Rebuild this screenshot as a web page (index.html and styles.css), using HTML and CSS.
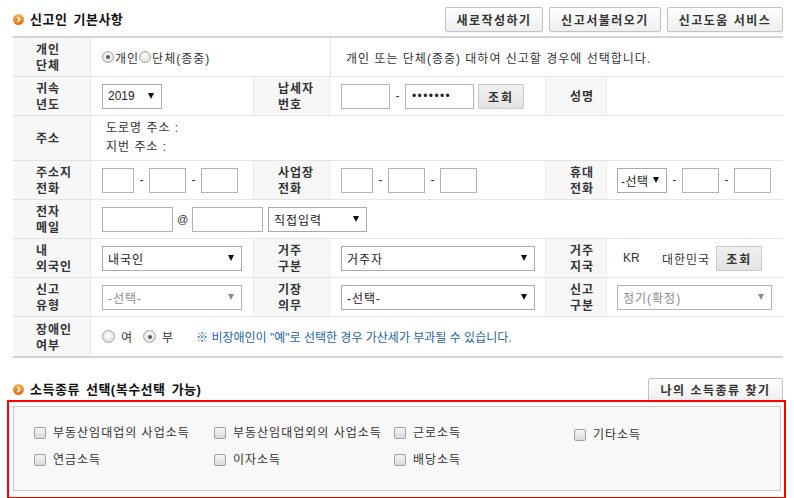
FILE: index.html
```html
<!DOCTYPE html>
<html lang="ko">
<head>
<meta charset="utf-8">
<title>신고인 기본사항</title>
<link rel="stylesheet" href="styles.css">
</head>
<body>
<div class="page">
  <div class="sec-head">
    <h2 class="sec-title">
      <svg class="bullet" width="11" height="11" viewBox="0 0 11 11"><defs><linearGradient id="ga" x1="0" y1="0" x2="0" y2="1"><stop offset="0" stop-color="#f8b14c"/><stop offset="1" stop-color="#e46c10"/></linearGradient></defs><circle cx="5.5" cy="5.5" r="5.5" fill="url(#ga)"/><path d="M4.3 3 L6.8 5.5 L4.3 8" fill="none" stroke="#fff" stroke-width="1.6"/></svg>
      <span>신고인 기본사항</span>
    </h2>
    <div class="btns">
      <button class="btn w98">새로작성하기</button>
      <button class="btn w112">신고서불러오기</button>
      <button class="btn w116">신고도움 서비스</button>
    </div>
  </div>

  <div class="form">
    <!-- row 1 -->
    <div class="lab">개인<br>단체</div>
    <div class="val span2 tight ko">
      <span class="radio on"></span><span>개인</span><span class="radio"></span><span>단체(종중)</span>
    </div>
    <div class="val span3 desc bl ko">개인 또는 단체(종중) 대하여 신고할 경우에 선택합니다.</div>

    <!-- row 2 -->
    <div class="lab">귀속<br>년도</div>
    <div class="val"><div class="sel w60"><span class="lat">2019</span><i class="arr"></i></div></div>
    <div class="lab c2">납세자<br>번호</div>
    <div class="val">
      <span class="inp w49"></span><span class="dash">-</span><span class="inp w69 pw">•••••••</span><button class="gbtn">조회</button>
    </div>
    <div class="lab c2">성명</div>
    <div class="val c6"></div>

    <!-- row 3 -->
    <div class="lab">주소</div>
    <div class="val span5 addr ko">
      <div>도로명 주소 :</div>
      <div>지번 주소 :</div>
    </div>

    <!-- row 4 -->
    <div class="lab">주소지<br>전화</div>
    <div class="val"><span class="inp w32"></span><span class="dash">-</span><span class="inp w37"></span><span class="dash">-</span><span class="inp w37"></span></div>
    <div class="lab c2">사업장<br>전화</div>
    <div class="val"><span class="inp w32"></span><span class="dash">-</span><span class="inp w37"></span><span class="dash">-</span><span class="inp w37"></span></div>
    <div class="lab c2">휴대<br>전화</div>
    <div class="val c6"><div class="sel w50 sm ko"><span>-선택</span><i class="arr"></i></div><span class="dash">-</span><span class="inp w37"></span><span class="dash">-</span><span class="inp w37"></span></div>

    <!-- row 5 -->
    <div class="lab">전자<br>메일</div>
    <div class="val span5"><span class="inp w71"></span><span class="at">@</span><span class="inp w71"></span><div class="sel w99 ml5 ko"><span>직접입력</span><i class="arr"></i></div></div>

    <!-- row 6 -->
    <div class="lab">내<br>외국인</div>
    <div class="val"><div class="sel w140 ko"><span>내국인</span><i class="arr"></i></div></div>
    <div class="lab c2">거주<br>구분</div>
    <div class="val"><div class="sel w194 ko"><span>거주자</span><i class="arr"></i></div></div>
    <div class="lab c2">거주<br>지국</div>
    <div class="val c6"><span class="lat kr">KR</span><span class="nation ko">대한민국</span><button class="gbtn">조회</button></div>

    <!-- row 7 -->
    <div class="lab">신고<br>유형</div>
    <div class="val"><div class="sel w140 dis ko"><span>-선택-</span><i class="arr"></i></div></div>
    <div class="lab c2">기장<br>의무</div>
    <div class="val"><div class="sel w194 ko"><span>-선택-</span><i class="arr"></i></div></div>
    <div class="lab c2">신고<br>구분</div>
    <div class="val c6"><div class="sel w155 dis ko"><span>정기(확정)</span><i class="arr"></i></div></div>

    <!-- row 8 -->
    <div class="lab last">장애인<br>여부</div>
    <div class="val span5 last">
      <span class="radio big"></span><span class="rlab ko">여</span>
      <span class="radio big on"></span><span class="rlab ko">부</span>
      <span class="note">※ 비장애인이 "예"로 선택한 경우 가산세가 부과될 수 있습니다.</span>
    </div>
  </div>

  <div class="sec-head two">
    <h2 class="sec-title">
      <svg class="bullet" width="11" height="11" viewBox="0 0 11 11"><defs><linearGradient id="gb" x1="0" y1="0" x2="0" y2="1"><stop offset="0" stop-color="#f8b14c"/><stop offset="1" stop-color="#e46c10"/></linearGradient></defs><circle cx="5.5" cy="5.5" r="5.5" fill="url(#gb)"/><path d="M4.3 3 L6.8 5.5 L4.3 8" fill="none" stroke="#fff" stroke-width="1.6"/></svg>
      <span>소득종류 선택(복수선택 가능)</span>
    </h2>
    <button class="btn w134">나의 소득종류 찾기</button>
  </div>

  <div class="redbox">
    <div class="inner">
      <label class="chk"><span class="box"></span>부동산임대업의 사업소득</label>
      <label class="chk"><span class="box"></span>부동산임대업외의 사업소득</label>
      <label class="chk"><span class="box"></span>근로소득</label>
      <label class="chk shift"><span class="box"></span>기타소득</label>
      <label class="chk"><span class="box"></span>연금소득</label>
      <label class="chk"><span class="box"></span>이자소득</label>
      <label class="chk"><span class="box"></span>배당소득</label>
    </div>
  </div>
</div>
</body>
</html>
```

FILE: styles.css
```css
* { box-sizing: border-box; }
html, body { margin: 0; padding: 0; background: #fff; }
body {
  font-family: "Liberation Sans", "Noto Sans CJK KR", sans-serif;
  font-size: 12px;
  color: #333;
}
.page {
  width: 794px;
  padding: 0 11px 0 13px;
}
.ko { letter-spacing: 1px; }

/* section header */
.sec-head {
  display: flex;
  justify-content: space-between;
  align-items: center;
  height: 36px;
  padding-top: 7px;
  padding-bottom: 4px;
}
.sec-head.two {
  height: 43px;
  padding-top: 20px;
  padding-bottom: 0;
}
.sec-title {
  margin: 0;
  display: flex;
  align-items: center;
  gap: 6px;
  font-size: 13px;
  font-weight: bold;
  color: #111;
  letter-spacing: 0.5px;
  word-spacing: 2px;
  line-height: 16px;
}
.bullet { display: block; flex: none; }
.btns { display: flex; gap: 6px; }
.btn {
  height: 25px;
  padding: 0;
  border: 1px solid #c3c3c3;
  border-radius: 2px;
  background: linear-gradient(#ffffff, #eeeeee);
  font-family: "Noto Sans CJK KR", sans-serif;
  font-size: 12px;
  font-weight: bold;
  letter-spacing: 1.5px;
  color: #333;
  box-shadow: 0 1px 1px rgba(0,0,0,0.06);
}
.sec-head.two .btn { height: 24px; }
.w98 { width: 98px; }
.w112 { width: 112px; }
.w116 { width: 116px; }
.w134 { width: 135px; }

/* form grid */
.form {
  display: grid;
  grid-template-columns: 78px 162px 77px 215px 62px 176px;
  grid-template-rows: 39px 39px 45px 39px 39px 39px 39px 39px;
  border-top: 2px solid #d4d4d4;
  border-bottom: 2px solid #d4d4d4;
}
.lab {
  display: flex;
  align-items: center;
  padding-left: 23px;
  background: #f7f7f7;
  font-family: "Noto Sans CJK KR", sans-serif;
  font-weight: bold;
  font-size: 12px;
  letter-spacing: 1px;
  line-height: 16px;
  color: #333;
  border-bottom: 1px solid #e4e4e4;
  border-right: 1px solid #ebebeb;
}
.lab.c2 {
  padding-left: 24px;
  border-left: 1px solid #ebebeb;
}
.val {
  display: flex;
  align-items: center;
  padding-left: 11px;
  border-bottom: 1px solid #e4e4e4;
  min-width: 0;
  white-space: nowrap;
}
.val.c6 { padding-left: 10px; }
.last { border-bottom: none; }
.span2 { grid-column: span 2; }
.span3 { grid-column: span 3; }
.span5 { grid-column: span 5; }
.bl { border-left: 1px solid #e6e6e6; }
.desc { padding-left: 15px; }
.addr {
  flex-direction: column;
  align-items: flex-start;
  justify-content: center;
  padding-left: 15px;
  line-height: 19px;
}
.tight { gap: 0; }
.tight .radio { margin-right: 1px; }

/* controls */
.inp {
  display: block;
  height: 25px;
  border: 1px solid #b3b3b3;
  background: #fff;
  flex: none;
}
.w32 { width: 32px; }
.w37 { width: 37px; }
.w49 { width: 49px; }
.w50 { width: 50px; }
.w60 { width: 60px; }
.w69 { width: 69px; }
.w71 { width: 71px; }
.w99 { width: 99px; }
.w140 { width: 140px; }
.w155 { width: 155px; }
.w194 { width: 194px; }
.pw {
  padding-left: 6px;
  line-height: 23px;
  font-size: 12px;
  letter-spacing: 1.4px;
  color: #222;
}
.dash {
  width: 15px;
  text-align: center;
  flex: none;
  color: #333;
}
.at {
  width: 19px;
  text-align: center;
  font-size: 11px;
  flex: none;
}
.ml5 { margin-left: 5px; }
.sel {
  display: flex;
  align-items: center;
  justify-content: space-between;
  height: 25px;
  padding: 0 7px 0 5px;
  border: 1px solid #a9a9a9;
  background: #fff;
  color: #222;
  flex: none;
}
.sel.sm { padding: 0 7px 0 3px; letter-spacing: 0.5px; }
.arr {
  display: block;
  width: 0;
  height: 0;
  border-left: 3px solid transparent;
  border-right: 3px solid transparent;
  border-top: 6px solid #111;
}
.sel.dis { color: #8a8a8a; border-color: #b5b5b5; }
.sel.dis .arr { border-top-color: #8a8a8a; }
.gbtn {
  height: 25px;
  width: 46px;
  margin-left: 4px;
  padding: 0;
  border: 1px solid #c9c9c9;
  border-radius: 1px;
  background: linear-gradient(#f0f0f0, #e3e3e3);
  font-family: "Noto Sans CJK KR", sans-serif;
  font-size: 12px;
  font-weight: bold;
  letter-spacing: 2px;
  color: #333;
}
.kr { margin-left: 6px; width: 39px; }
.nation { margin-right: 2px; }

.radio {
  display: inline-block;
  width: 12px;
  height: 12px;
  border-radius: 50%;
  border: 1px solid #a6a6a6;
  background: radial-gradient(circle at 50% 40%, #ffffff 0%, #e6e6e6 60%, #d2d2d2 100%);
  position: relative;
  flex: none;
}
.radio.big { width: 13px; height: 13px; }
.radio.on::after {
  content: "";
  position: absolute;
  left: 3px;
  top: 3px;
  width: 4px;
  height: 4px;
  border-radius: 50%;
  background: #555;
}
.radio.big.on::after { left: 3.5px; top: 3.5px; }
.rlab { margin-left: 6px; margin-right: 10px; }
.note {
  margin-left: 12px;
  color: #1d62a8;
}

/* income types */
.redbox {
  position: relative;
  margin: -1px -3px 0 -6px;
  height: 99px;
  border: 2px solid #ff0000;
  padding: 4px 3px 6px 4px;
}
.inner {
  height: 85px;
  border: 1px solid #c8c8c8;
  background: #f8f8f8;
  display: grid;
  grid-template-columns: 180px 180px 180px 180px;
  grid-template-rows: 18px 18px;
  row-gap: 9px;
  padding: 17px 0 0 20px;
}
.chk {
  display: flex;
  align-items: center;
  line-height: 18px;
  font-size: 12px;
  letter-spacing: 1px;
  color: #333;
  white-space: nowrap;
}
.chk .box {
  width: 12px;
  height: 12px;
  margin-right: 7px;
  border: 1px solid #9f9f9f;
  border-radius: 2px;
  background: linear-gradient(#f6f6f6, #dadada);
  flex: none;
}
.chk.shift { margin-top: 3px; }
```
